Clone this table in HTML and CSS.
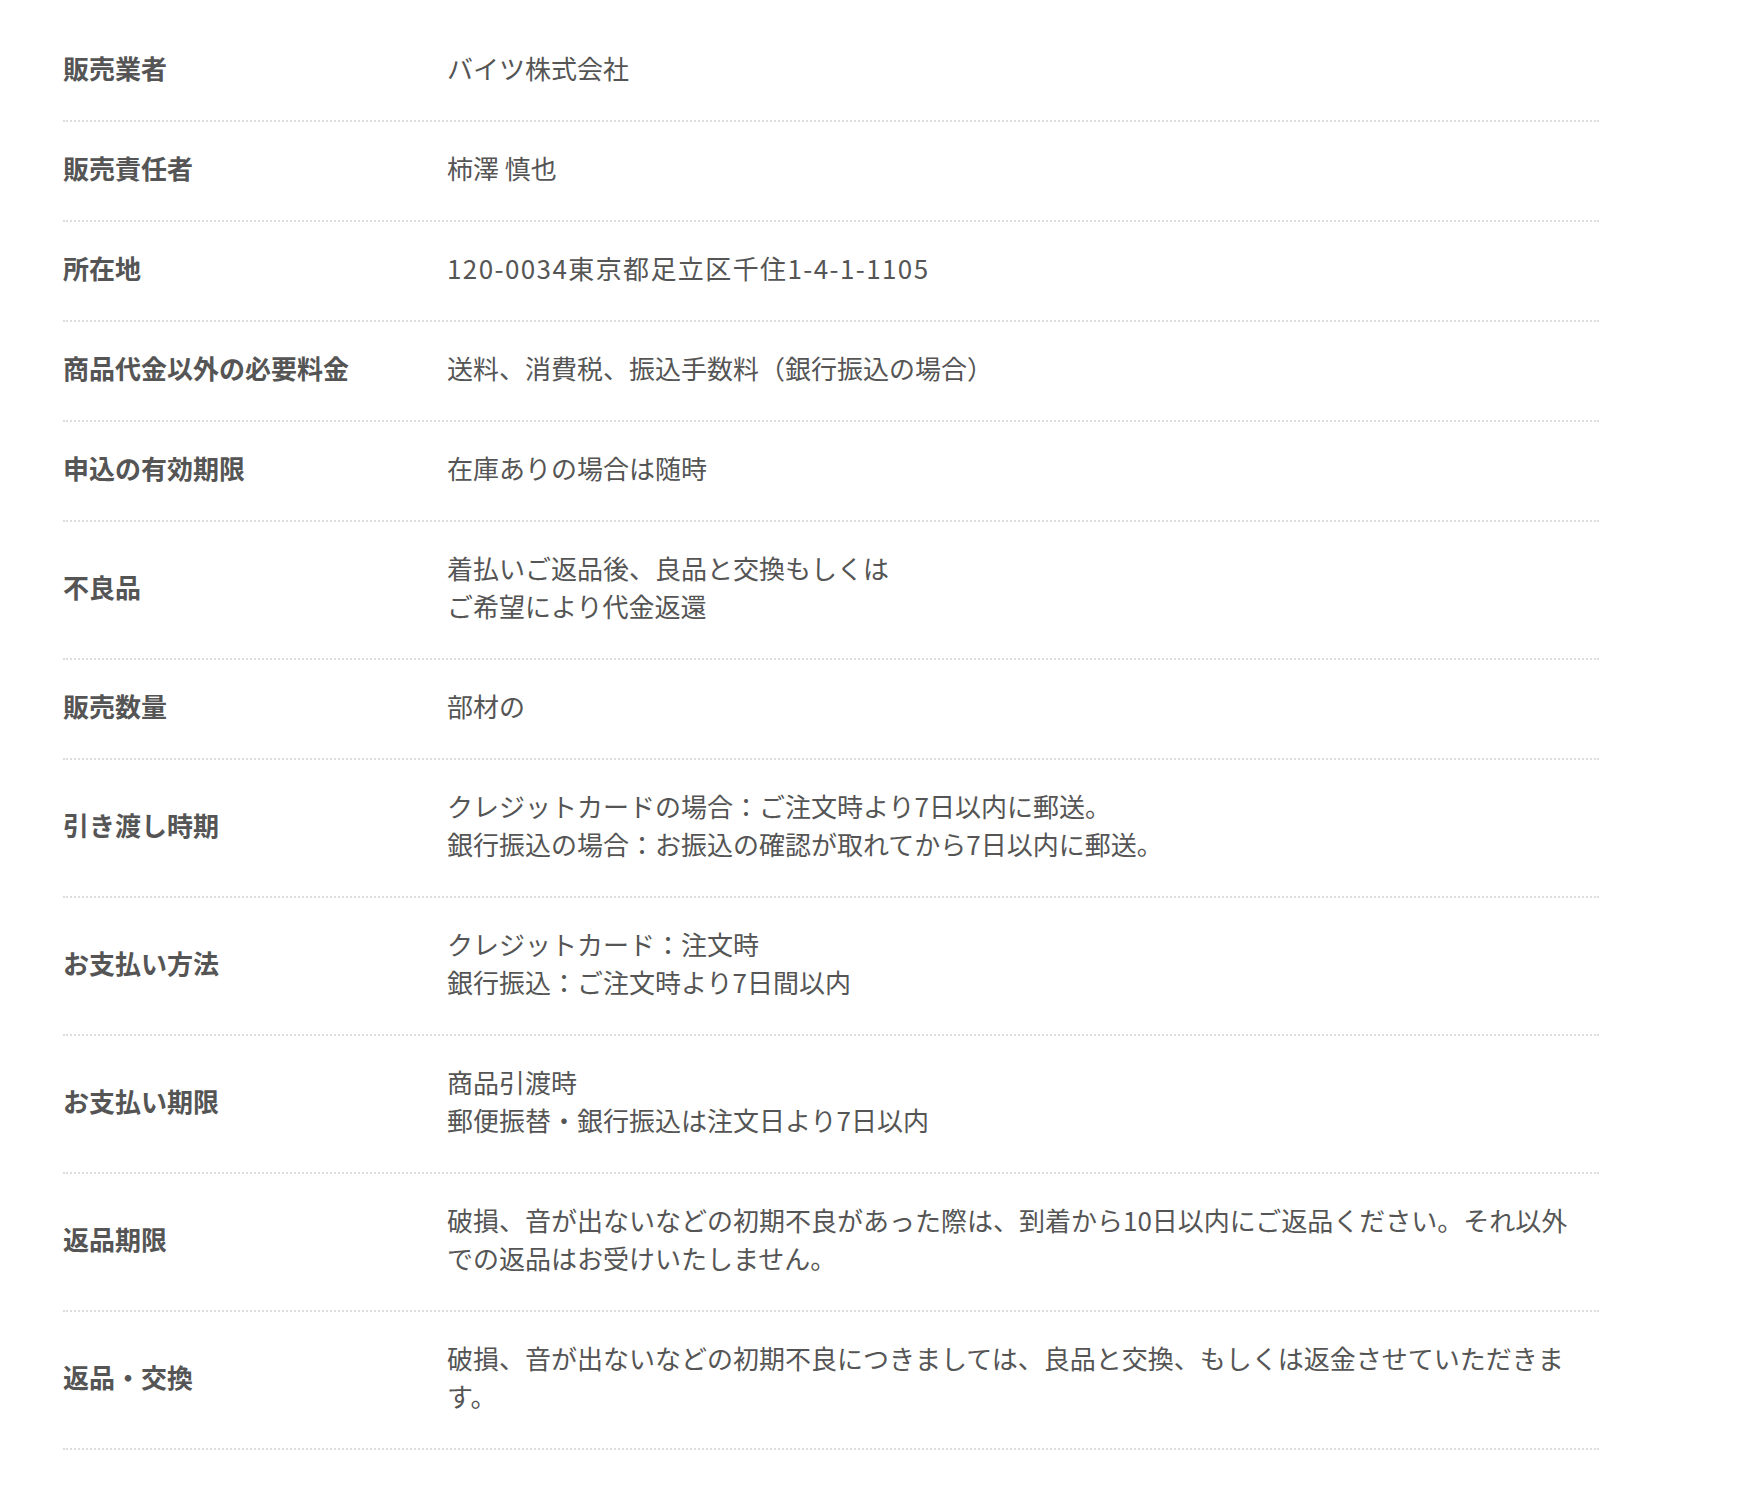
FILE: index.html
```html
<!DOCTYPE html>
<html lang="ja">
<head>
<meta charset="utf-8">
<title>特定商取引法に基づく表記</title>
<link rel="stylesheet" href="styles.css">
</head>
<body>
<main class="page">
  <dl class="law-table">
    <div class="row"><dt class="label">販売業者</dt><dd class="value">バイツ株式会社</dd></div>
    <div class="row"><dt class="label">販売責任者</dt><dd class="value">柿澤 慎也</dd></div>
    <div class="row"><dt class="label">所在地</dt><dd class="value address">120-0034東京都足立区千住1-4-1-1105</dd></div>
    <div class="row"><dt class="label">商品代金以外の必要料金</dt><dd class="value">送料、消費税、振込手数料（銀行振込の場合）</dd></div>
    <div class="row"><dt class="label">申込の有効期限</dt><dd class="value">在庫ありの場合は随時</dd></div>
    <div class="row"><dt class="label">不良品</dt><dd class="value">着払いご返品後、良品と交換もしくは<br>ご希望により代金返還</dd></div>
    <div class="row"><dt class="label">販売数量</dt><dd class="value">部材の</dd></div>
    <div class="row"><dt class="label">引き渡し時期</dt><dd class="value">クレジットカードの場合：ご注文時より7日以内に郵送。<br>銀行振込の場合：お振込の確認が取れてから7日以内に郵送。</dd></div>
    <div class="row"><dt class="label">お支払い方法</dt><dd class="value">クレジットカード：注文時<br>銀行振込：ご注文時より7日間以内</dd></div>
    <div class="row"><dt class="label">お支払い期限</dt><dd class="value">商品引渡時<br>郵便振替・銀行振込は注文日より7日以内</dd></div>
    <div class="row"><dt class="label">返品期限</dt><dd class="value">破損、音が出ないなどの初期不良があった際は、到着から10日以内にご返品ください。それ以外での返品はお受けいたしません。</dd></div>
    <div class="row"><dt class="label">返品・交換</dt><dd class="value">破損、音が出ないなどの初期不良につきましては、良品と交換、もしくは返金させていただきます。</dd></div>
  </dl>
</main>
</body>
</html>
```

FILE: styles.css
```css
html, body {
  margin: 0;
  padding: 0;
  background: #ffffff;
}

body {
  font-family: "Noto Sans CJK JP", "Noto Sans", sans-serif;
  color: #555555;
  font-size: 26px;
  line-height: 38px;
}

.page {
  padding: 22px 0 40px 63px;
}

.law-table {
  width: 1536px;
  margin: 0;
}

.row {
  display: flex;
  align-items: center;
  padding: 27px 0 33px;
  border-bottom: 2px dotted #dddddd;
}

.label {
  flex: 0 0 384px;
  margin: 0;
  font-weight: 700;
}

.value {
  flex: 1 1 auto;
  margin: 0;
  padding-right: 24px;
  font-weight: 400;
}

.address {
  letter-spacing: 1.4px;
}
```
